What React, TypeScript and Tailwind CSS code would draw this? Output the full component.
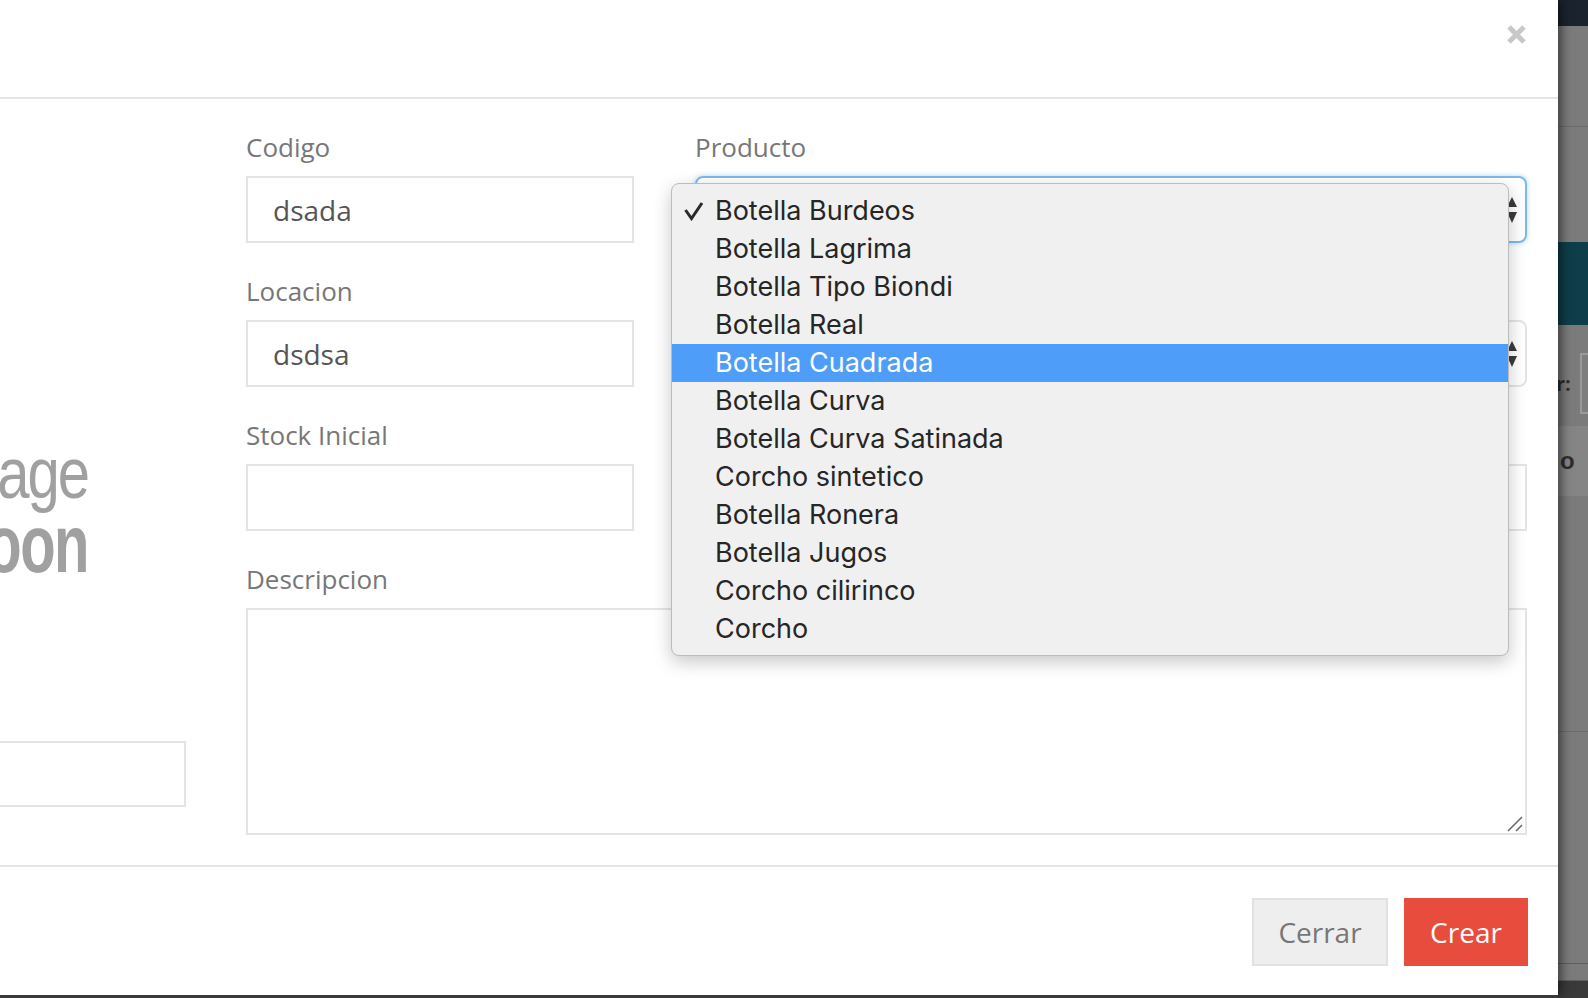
import React from "react";

const items = [
  "Botella Burdeos",
  "Botella Lagrima",
  "Botella Tipo Biondi",
  "Botella Real",
  "Botella Cuadrada",
  "Botella Curva",
  "Botella Curva Satinada",
  "Corcho sintetico",
  "Botella Ronera",
  "Botella Jugos",
  "Corcho cilirinco",
  "Corcho",
];

function Arrows() {
  return (
    <svg width="10" height="26" viewBox="0 0 10 26">
      <path d="M5 0 L10 10 L0 10 Z" fill="#3b3b3b" />
      <path d="M0 15 L10 15 L5 26 Z" fill="#3b3b3b" />
    </svg>
  );
}

function Label({ children }: { children?: React.ReactNode }) {
  return (
    <div className="h-[34px] mb-[12px] text-[26px] leading-[34px] text-[#777777] whitespace-nowrap">
      {children}
    </div>
  );
}

export default function App() {
  return (
    <div className="w-[1588px] h-[998px] flex overflow-hidden bg-[#7a7a7a] relative font-['Open_Sans',sans-serif]">
      {/* modal column */}
      <div className="w-[1558px] h-[998px] flex flex-col shrink-0 relative z-10">
        <div className="w-[1558px] h-[995px] bg-white flex flex-col shadow-[3px_0_10px_rgba(0,0,0,0.55)]">
          {/* header */}
          <div className="h-[99px] border-b-2 border-[#e5e5e5] flex justify-end pt-[25px] pr-[32px] shrink-0">
            <svg width="19" height="19" viewBox="0 0 19 19">
              <path d="M2 2 L17 17 M17 2 L2 17" stroke="#c8c8c8" strokeWidth="5" />
            </svg>
          </div>
          {/* body */}
          <div className="h-[766px] flex items-start shrink-0 overflow-hidden">
            {/* left column */}
            <div className="w-[186px] shrink-0 flex flex-col items-start">
              <div className="w-[88px] h-[60px] mt-[344px] flex justify-end overflow-x-clip">
                <span className="font-['Liberation_Sans',sans-serif] text-[58px] leading-[60px] tracking-[-2px] text-[#a0a0a0] whitespace-nowrap scale-y-[1.24]">
                  age
                </span>
              </div>
              <div className="w-[88px] h-[60px] mt-[11px] flex justify-end overflow-x-clip">
                <span className="font-['Liberation_Sans',sans-serif] font-bold text-[58px] leading-[60px] tracking-[-1.5px] text-[#a0a0a0] whitespace-nowrap scale-y-[1.4]">
                  oon
                </span>
              </div>
              <div className="w-[186px] h-[66px] mt-[167px] border-2 border-l-0 border-[#e4e4e4] bg-white" />
            </div>
            {/* form */}
            <div className="ml-[60px] w-[1281px] pt-[31px] flex flex-col">
              <div className="flex gap-[61px]">
                <div className="w-[388px] flex flex-col">
                  <Label>Codigo</Label>
                  <div className="h-[67px] border-2 border-[#e4e4e4] flex items-center pl-[25px] text-[28px] text-[#555555] mb-[31px]">
                    dsada
                  </div>
                  <Label>Locacion</Label>
                  <div className="h-[67px] border-2 border-[#e4e4e4] flex items-center pl-[25px] text-[28px] text-[#555555] mb-[31px]">
                    dsdsa
                  </div>
                  <Label>Stock Inicial</Label>
                  <div className="h-[67px] border-2 border-[#e4e4e4] mb-[31px]" />
                </div>
                <div className="w-[832px] flex flex-col">
                  <Label>Producto</Label>
                  <div className="h-[67px] border-2 border-[#7db8ec] rounded-[8px] shadow-[0_0_5px_rgba(102,175,233,0.5)] flex items-center justify-between pl-[25px] pr-[8px] text-[28px] text-[#555555] mb-[31px]">
                    <span>Botella Burdeos</span>
                    <Arrows />
                  </div>
                  <Label />
                  <div className="h-[67px] border-2 border-[#e4e4e4] rounded-[8px] flex items-center justify-end pr-[8px] mb-[31px]">
                    <Arrows />
                  </div>
                  <Label />
                  <div className="h-[67px] border-2 border-[#e4e4e4] mb-[31px]" />
                </div>
              </div>
              <Label>Descripcion</Label>
              <div className="h-[227px] border-2 border-[#e4e4e4] relative">
                <svg className="absolute right-[2px] bottom-[1px]" width="16" height="16" viewBox="0 0 16 16">
                  <path d="M1 15 L15 1 M9 15 L15 9" stroke="#666" strokeWidth="1.5" />
                </svg>
              </div>
            </div>
          </div>
          {/* footer */}
          <div className="flex-1 border-t-2 border-[#e5e5e5] flex justify-end items-start pt-[31px] pr-[30px] gap-[16px]">
            <div className="w-[136px] h-[68px] bg-[#eeeeee] border-2 border-[#e2e2e2] flex items-center justify-center text-[28px] text-[#777777]">
              Cerrar
            </div>
            <div className="w-[124px] h-[68px] bg-[#e74c3c] flex items-center justify-center text-[28px] text-white">
              Crear
            </div>
          </div>
        </div>
        <div className="h-[3px] bg-[#3a3a3a]" />
      </div>

      {/* background page strip */}
      <div className="w-[30px] h-[998px] shrink-0 flex flex-col">
        <div className="h-[26px] bg-[#1b232e]" />
        <div className="h-[101px] bg-[#7b7b7b] border-b border-[#6c6c6c]" />
        <div className="h-[115px] bg-[#7b7b7b]" />
        <div className="h-[83px] bg-[#0e3e4a]" />
        <div className="h-[101px] bg-[#7b7b7b] flex items-start pt-[28px]">
          <div className="h-[61px] flex items-center">
            <span className="text-[20px] text-[#2e2e2e] font-bold ml-[-2px] w-[24px]">r:</span>
            <div className="w-[20px] h-[61px] border-2 border-[#9a9a9a] bg-[#7e7e7e]" />
          </div>
        </div>
        <div className="h-[70px] bg-[#858585] flex items-center">
          <span className="font-['Liberation_Sans',sans-serif] text-[24px] font-bold text-[#2e2e2e] ml-[2px]">o</span>
        </div>
        <div className="h-[236px] bg-[#7b7b7b] border-b border-[#6c6c6c]" />
        <div className="h-[232px] bg-[#7b7b7b] border-b border-[#5e5e5e]" />
        <div className="h-[17px] bg-[#7b7b7b] border-b border-[#5e5e5e]" />
        <div className="flex-1 bg-[#3a3a3a]" />
      </div>

      {/* native select dropdown menu */}
      <div className="absolute left-[671px] top-[183px] w-[838px] h-[473px] z-20 bg-[#f0f0f0] rounded-[8px] border border-[#bcbcbc] shadow-[0_6px_18px_rgba(0,0,0,0.22)] pt-[8px] font-['Inter',sans-serif] overflow-hidden">
        {items.map((it, i) => (
          <div
            key={it}
            className={
              i === 4
                ? "h-[38px] flex items-center pl-[43px] text-[27px] bg-[#4e9df8] text-white relative"
                : "h-[38px] flex items-center pl-[43px] text-[27px] text-[#262626] relative"
            }
          >
            {i === 0 && (
              <svg className="absolute left-[12px] top-[9px]" width="20" height="20" viewBox="0 0 20 20">
                <path d="M1.5 9 L7.5 17.5 L18 2" stroke="#2a2a2a" strokeWidth="3" fill="none" />
              </svg>
            )}
            {it}
          </div>
        ))}
      </div>
    </div>
  );
}
